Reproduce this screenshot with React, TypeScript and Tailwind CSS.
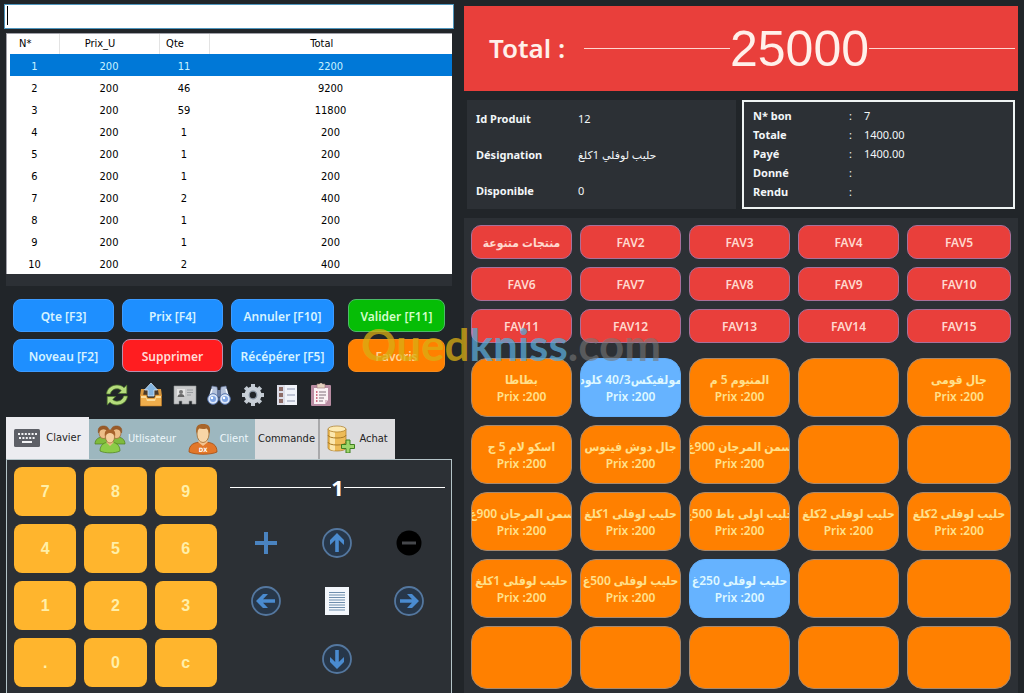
import React from 'react';

type Product = { name: string; active?: boolean } | null;

const rows = [
  [1, 200, 11, 2200],
  [2, 200, 46, 9200],
  [3, 200, 59, 11800],
  [4, 200, 1, 200],
  [5, 200, 1, 200],
  [6, 200, 1, 200],
  [7, 200, 2, 400],
  [8, 200, 1, 200],
  [9, 200, 1, 200],
  [10, 200, 2, 400],
];

const favorites = [
  'منتجات متنوعة', 'FAV2', 'FAV3', 'FAV4', 'FAV5',
  'FAV6', 'FAV7', 'FAV8', 'FAV9', 'FAV10',
  'FAV11', 'FAV12', 'FAV13', 'FAV14', 'FAV15',
];

const products: Product[] = [
  { name: 'بطاطا' },
  { name: 'مولفيكس40/3 كلود', active: true },
  { name: 'المنيوم 5 م' },
  null,
  { name: 'جال قومى' },
  { name: 'اسكو لام 5 ج' },
  { name: 'جال دوش فينوس' },
  { name: 'سمن المرجان 900غ' },
  null,
  null,
  { name: 'سمن المرجان 900غ' },
  { name: 'حليب لوفلى 1كلغ' },
  { name: 'حليب اولى باط 500غ' },
  { name: 'حليب لوفلى 2كلغ' },
  { name: 'حليب لوفلى 2كلغ' },
  { name: 'حليب لوفلى 1كلغ' },
  { name: 'حليب لوفلى 500غ' },
  { name: 'حليب لوفلى 250غ', active: true },
  null,
  null,
  null,
  null,
  null,
  null,
  null,
];

const keys = ['7', '8', '9', '4', '5', '6', '1', '2', '3', '.', '0', 'c'];

const ticket = [
  ['N* bon', '7'],
  ['Totale', '1400.00'],
  ['Payé', '1400.00'],
  ['Donné', ''],
  ['Rendu', ''],
];

/* ---------- toolbar icons ---------- */

const RefreshIcon = () => (
  <svg viewBox="0 0 24 24" className="size-6">
    <g fill="#b5dc7c" stroke="#4f7a2c" strokeWidth="0.7">
      <path d="M1.5 11C2 5.500 6.500 2 12 2c3 0 5.300 1 7 2.700L21.800 2v8.500h-8.500l3-3C15 6.300 13.700 5.800 12 5.800c-3.300 0-6 2-6.700 5.200z" />
      <path d="M22.500 13c-.5 5.500-5 9-10.500 9-3 0-5.300-1-7-2.700L2.200 22v-8.500h8.500l-3 3c1.300 1.200 2.600 1.700 4.300 1.700 3.300 0 6-2 6.700-5.200z" />
    </g>
  </svg>
);

const OutboxIcon = () => (
  <svg viewBox="0 0 24 24" className="size-6">
    <path d="M2 6h20l1 7H1z" fill="#d9983f" />
    <path d="M5 7h14l1 6H4z" fill="#4a3a28" />
    <path d="M1.500 12h6l1 3h7l1-3h6v11h-21z" fill="#f0ae4c" stroke="#c98127" strokeWidth="0.600" />
    <path d="M2 13h5l1 3h8l1-3h5v2H17l-1 3H8l-1-3H2z" fill="#fbdc9b" />
    <path d="M12 0l6.500 7H15v6H9V7H5.500z" fill="#83b4e0" stroke="#d3e7f8" strokeWidth="0.800" />
  </svg>
);

const CardIcon = () => (
  <svg viewBox="0 0 24 24" className="size-6">
    <path d="M1 3h22v18h-4v-3h-3v3H9v-3H6v3H1z" fill="#c9cacb" stroke="#909497" strokeWidth="0.600" />
    <path d="M4 6h8v8H4z" fill="#e4e4e4" />
    <circle cx="8" cy="9" r="2" fill="#777" />
    <path d="M4.500 14c0-4 7-4 7 0z" fill="#666" />
    <path d="M14 7h6M14 9.500h6M14 12h4" stroke="#9a9da0" strokeWidth="1" />
  </svg>
);

const BinocularsIcon = () => (
  <svg viewBox="0 0 24 24" className="size-6">
    <path d="M5 3l5 1 1.500 10-10 3z" fill="#b6c3dc" stroke="#5f7196" strokeWidth="0.600" />
    <path d="M19 3l-5 1-1.500 10 10 3z" fill="#b6c3dc" stroke="#5f7196" strokeWidth="0.600" />
    <path d="M5 6l-2 7M19 6l2 7" stroke="#f5f9ff" strokeWidth="1.500" />
    <rect x="10" y="7" width="4" height="6" fill="#6b7da3" />
    <circle cx="6" cy="16" r="5.300" fill="#dbe6f8" stroke="#5573ab" />
    <circle cx="18" cy="16" r="5.300" fill="#dbe6f8" stroke="#5573ab" />
    <circle cx="6" cy="16" r="3" fill="#7ea4e4" />
    <circle cx="18" cy="16" r="3" fill="#7ea4e4" />
    <circle cx="5" cy="15" r="1.200" fill="#fff" />
    <circle cx="17" cy="15" r="1.200" fill="#fff" />
  </svg>
);

const GearIcon = () => (
  <svg viewBox="0 0 24 24" className="size-6">
    <g stroke="#c3cad2" strokeWidth="4">
      <path d="M12 1v22M1 12h22M4.300 4.300l15.400 15.400M19.700 4.300L4.300 19.700" />
    </g>
    <circle cx="12" cy="12" r="8.500" fill="#c9d0d8" />
    <circle cx="12" cy="12" r="3.800" fill="#212529" stroke="#8793a1" strokeWidth="1.200" />
  </svg>
);

const ListIcon = () => (
  <svg viewBox="0 0 24 24" className="size-6">
    <rect x="2" y="2" width="20" height="20" fill="#f1f3f9" />
    <rect x="2" y="2" width="8" height="20" fill="#dcdde8" />
    <g fill="#8d6b66">
      <rect x="4" y="4" width="4" height="4" />
      <rect x="4" y="10" width="4" height="4" />
      <rect x="4" y="16" width="4" height="4" />
    </g>
    <path d="M12 6h8M12 12h8M12 18h8" stroke="#8b94ad" strokeWidth="1.200" />
  </svg>
);

const ClipboardIcon = () => (
  <svg viewBox="0 0 24 24" className="size-6">
    <rect x="2" y="2" width="20" height="21" rx="1" fill="#b98ca2" />
    <path d="M5 5h14v12l-3 4H5z" fill="#fbf2f5" />
    <path d="M19 17h-3v4z" fill="#d9bcc8" />
    <path d="M8 1h8v4H8z" fill="#e5d3c0" stroke="#977" strokeWidth="0.600" />
    <circle cx="12" cy="1.500" r="1.500" fill="#e5d3c0" />
    <path d="M10 9h7M10 12h7M10 15h5M10 18h4" stroke="#81707c" strokeWidth="1.100" />
    <path d="M7 9h1.500M7 12h1.500M7 15h1.500M7 18h1.500" stroke="#c2455d" strokeWidth="1.300" />
  </svg>
);

const tools = [
  { label: 'Actualiser', Icon: RefreshIcon },
  { label: 'Envoyer', Icon: OutboxIcon },
  { label: 'Carte', Icon: CardIcon },
  { label: 'Rechercher', Icon: BinocularsIcon },
  { label: 'Paramètres', Icon: GearIcon },
  { label: 'Liste', Icon: ListIcon },
  { label: 'Rapport', Icon: ClipboardIcon },
];

/* ---------- tab icons ---------- */

const KeyboardIcon = () => (
  <svg viewBox="0 0 26 18" className="h-[18px] w-[26px]">
    <rect width="26" height="18" rx="1.500" fill="#5d5f66" />
    <path d="M4 5h19M5 9h17" stroke="#f2f2f4" strokeWidth="2" strokeDasharray="2 1.400" />
    <path d="M8 13h10" stroke="#f2f2f4" strokeWidth="2" />
  </svg>
);

const UsersIcon = () => (
  <svg viewBox="0 0 32 30" className="h-[30px] w-8">
    <g stroke="#4d7f1d" strokeWidth="0.700" fill="#7fbb3c">
      <path d="M1 20c0-5 4-7 8-7s8 2 8 7z" />
      <path d="M15 20c0-5 4-7 8-7s8 2 8 7z" />
    </g>
    <g stroke="#8f5625" strokeWidth="0.600">
      <ellipse cx="9.500" cy="9" rx="4.500" ry="5.500" fill="#edbd87" />
      <ellipse cx="22.500" cy="9" rx="4.500" ry="5.500" fill="#edbd87" />
      <path d="M4.500 9c-1-5 1-7 5-7s6 2 5 7c-1-3-3-4-5-4s-4 1-5 4zM17.500 9c-1-5 1-7 5-7s6 2 5 7c-1-3-3-4-5-4s-4 1-5 4z" fill="#9a5a28" />
    </g>
    <path d="M6 27c0-6 4-9 10-9s10 3 10 9c-5 2.500-15 2.500-20 0z" fill="#8ccc48" stroke="#4d7f1d" strokeWidth="0.700" />
    <path d="M12 18l4 4 4-4z" fill="#edbd87" />
    <ellipse cx="16" cy="13" rx="4.500" ry="6" fill="#f6cf9e" stroke="#8f5625" strokeWidth="0.600" />
    <path d="M11 13c-1-6 1-7.500 5-7.500s6 1.500 5 7.500c-1-3-3-4-5-4s-4 1-5 4z" fill="#a8632c" />
  </svg>
);

const ClientIcon = () => (
  <svg viewBox="0 0 30 32" className="h-8 w-[30px]">
    <path d="M1 29c0-7 4-10 14-10s14 3 14 10c-6 3-22 3-28 0z" fill="#e2772a" stroke="#a54c10" strokeWidth="0.800" />
    <path d="M10 19l5 4 5-4-2-4h-6z" fill="#f2c592" />
    <ellipse cx="15" cy="11" rx="6" ry="8.500" fill="#f8d5a6" stroke="#9a6024" strokeWidth="0.700" />
    <path d="M8.500 11C7 3 10 1 15 1s8.500 2 6.500 10c-1-4-1.500-5-3-5.500-3 .8-5 .5-7.500 0-1.300 1-1.800 2.500-2.500 5.500z" fill="#a86529" />
    <text x="15" y="29" textAnchor="middle" fontSize="6" fontWeight="700" fill="#fff">DX</text>
  </svg>
);

const DatabaseIcon = () => (
  <svg viewBox="0 0 28 28" className="size-7">
    <path d="M1 4v19c0 4 18 4 18 0V4z" fill="#edbb57" stroke="#a97a25" strokeWidth="0.700" />
    <path d="M3 6v18c1 1 3 1.500 5 1.500v-18z" fill="#fbe7ae" />
    <path d="M1 10c0 4 18 4 18 0M1 17c0 4 18 4 18 0" fill="none" stroke="#a97a25" />
    <ellipse cx="10" cy="4" rx="9" ry="3" fill="#fdeab3" stroke="#a97a25" strokeWidth="0.700" />
    <path d="M19 15h4v4.500h4.500v4H23V28h-4v-4.500h-4.500v-4H19z" fill="#9ed66a" stroke="#3d7f1f" />
  </svg>
);

/* ---------- keypad navigation ---------- */

const ArrowIcon = ({ turn }: { turn: string }) => (
  <svg viewBox="0 0 30 30" className={`size-[30px] ${turn}`}>
    <circle cx="15" cy="15" r="14" fill="#27374a" stroke="#54779f" strokeWidth="1.800" />
    <path d="M13.200 24V12L8 17v-5l7-7 7 7v5l-5.200-5v12z" fill="#4a8bd0" />
  </svg>
);

const PlusIcon = () => (
  <svg viewBox="0 0 22 22" className="size-[22px]">
    <path d="M11 0v22M0 11h22" stroke="#4a83c0" strokeWidth="4" />
  </svg>
);

const MinusIcon = () => (
  <svg viewBox="0 0 26 26" className="size-[26px]">
    <circle cx="13" cy="13" r="12.500" fill="#000" />
    <path d="M6 13h14" stroke="#45474b" strokeWidth="3" />
  </svg>
);

const PageIcon = () => (
  <svg viewBox="0 0 24 28" className="h-7 w-6">
    <rect width="24" height="28" fill="#f3f7fc" />
    <path d="M4 5.500h16M4 8h16M4 10.500h16M4 13h16M4 15.500h16M4 18h16M4 20.500h16M4 23h16" stroke="#6f8fae" strokeWidth="1.200" />
  </svg>
);

const actionBase = 'h-[33px] rounded-lg border pt-0.5 text-xs font-semibold whitespace-nowrap';
const actionBlue = `${actionBase} border-[#3d9bff] bg-[#1e8fff] text-[#d6f3ff]`;

const productBase = 'flex flex-col items-center justify-center overflow-hidden rounded-2xl border';

const SalePanel = () => (
  <section className="flex flex-col pt-1 pr-2 pl-1.5 text-[11px]">
    <div className="relative -mx-0.5">
      <input
        aria-label="Code produit"
        className="block h-[25px] w-full border border-[#4f96bd] bg-white px-1 text-black outline-none"
      />
      <span className="absolute top-0.5 left-[3px] h-[19px] w-px bg-black" />
    </div>

    <div className="mt-1 bg-[#2c3035] pb-3">
      <div className="border-t border-l border-[#a0a0a8] bg-white pl-[3px]">
        <table className="w-full table-fixed border-collapse text-center font-['DejaVu_Sans_Condensed','Noto_Sans',sans-serif] text-black">
          <colgroup>
            <col className="w-[49px]" />
            <col className="w-[100px]" />
            <col className="w-[50px]" />
            <col />
          </colgroup>
          <thead>
            <tr className="h-5">
              <th className="border-r border-[#e3e3e3] p-0 pr-[18px] font-normal">N*</th>
              <th className="border-r border-[#e3e3e3] p-0 pr-[18px] font-normal">Prix_U</th>
              <th className="border-r border-[#e3e3e3] p-0 pr-[18px] font-normal">Qte</th>
              <th className="p-0 pr-[18px] font-normal">Total</th>
            </tr>
          </thead>
          <tbody>
            {rows.map((row, i) => (
              <tr key={row[0]} className={i === 0 ? 'h-[22px] bg-[#0078d7] text-[#c9f3ff]' : 'h-[22px]'}>
                {row.map((cell, j) => (
                  <td key={j} className="p-0 pt-[5px]">{cell}</td>
                ))}
              </tr>
            ))}
          </tbody>
        </table>
      </div>
    </div>

    <div className="mt-[13px] grid grid-cols-[321fr_97fr] gap-3.5 px-[7px]">
      <div className="grid grid-cols-[101fr_101fr_103fr] gap-x-2 gap-y-[7px]">
        <button className={actionBlue}>Qte [F3]</button>
        <button className={actionBlue}>Prix [F4]</button>
        <button className={actionBlue}>Annuler [F10]</button>
        <button className={actionBlue}>Noveau [F2]</button>
        <button className={`${actionBase} border-[#b98fae] bg-[#ff1d20] text-[#ffdcd6]`}>Supprimer</button>
        <button className={actionBlue}>Récépérer [F5]</button>
      </div>
      <div className="grid gap-y-[7px]">
        <button className={`${actionBase} border-[#4dbb6a] bg-[#06bd06] text-[#d3ffc9]`}>Valider [F11]</button>
        <button className={`${actionBase} border-[#f58a1c] bg-[#ff8000] text-[#ffd79a]`}>Favoris</button>
      </div>
    </div>

    <div className="mt-[11px] flex justify-center gap-2.5 pr-5">
      {tools.map(({ label, Icon }) => (
        <button key={label} aria-label={label}>
          <Icon />
        </button>
      ))}
    </div>

    <div className="mt-2.5 flex h-[42px] items-end font-['DejaVu_Sans_Condensed','Noto_Sans',sans-serif]">
      <button className="flex h-[42px] w-[83px] items-center justify-center gap-1.5 bg-[#ececf0] text-[#222]">
        <KeyboardIcon />
        Clavier
      </button>
      <button className="flex h-10 w-[92px] items-center justify-center gap-0.5 bg-[#9db7bf] text-[#eef8fc]">
        <UsersIcon />
        Utlisateur
      </button>
      <button className="flex h-10 w-[74px] items-center justify-center gap-0.5 bg-[#9db7bf] text-[#eef8fc]">
        <ClientIcon />
        Client
      </button>
      <button className="h-10 w-[65px] border-r-2 border-[#a9a9ab] bg-[#dcdcde] text-[#222]">Commande</button>
      <button className="flex h-10 w-[75px] items-center justify-center gap-1 bg-[#dcdcde] text-[#222]">
        <DatabaseIcon />
        Achat
      </button>
    </div>

    <div className="grid flex-1 grid-cols-[203fr_215fr] gap-[13px] border-x border-t border-[#b4c4c8] bg-[#2c3035] pt-[7px] pr-1.5 pb-1 pl-[7px]">
      <div className="grid auto-rows-[49px] grid-cols-3 content-start gap-2 font-['Liberation_Sans',sans-serif]">
        {keys.map((key) => (
          <button key={key} className="rounded-lg bg-[#ffb52d] text-base font-bold text-[#ffefa8]">
            {key}
          </button>
        ))}
      </div>
      <div>
        <div className="flex h-10 items-center text-[22px] font-bold text-white">
          <span className="h-px flex-1 bg-white" />
          1
          <span className="h-px flex-1 bg-white" />
        </div>
        <div className="mt-[7px] grid auto-rows-[58px] grid-cols-3 place-items-center">
          <button aria-label="Plus"><PlusIcon /></button>
          <button aria-label="Haut"><ArrowIcon turn="rotate-0" /></button>
          <button aria-label="Moins"><MinusIcon /></button>
          <button aria-label="Gauche"><ArrowIcon turn="-rotate-90" /></button>
          <button aria-label="Note"><PageIcon /></button>
          <button aria-label="Droite"><ArrowIcon turn="rotate-90" /></button>
          <button aria-label="Bas" className="col-start-2"><ArrowIcon turn="rotate-180" /></button>
        </div>
      </div>
    </div>
  </section>
);

const CatalogPanel = () => (
  <section className="flex flex-col pt-1.5 pr-1.5 pl-1">
    <div className="flex h-[85px] items-center bg-[#e93f3b] pr-[3px] pl-[25px] text-[#fff0ea]">
      <span className="w-[95px] text-[26px] font-semibold whitespace-nowrap">Total :</span>
      <span className="h-px flex-1 bg-[#ffd6d0]" />
      <span className="font-['Liberation_Sans',sans-serif] text-[50px] leading-none">25000</span>
      <span className="h-px flex-1 bg-[#ffd6d0]" />
    </div>

    <div className="mt-[9px] grid h-[109px] grid-cols-[269fr_273fr] gap-1.5 px-[3px] text-[11px] text-[#f2f6f8]">
      <dl className="grid grid-cols-[102px_1fr] content-center items-center gap-y-4 bg-[#2c3035] pl-[9px] leading-5">
        <dt className="font-bold">Id Produit</dt>
        <dd>12</dd>
        <dt className="font-bold">Désignation</dt>
        <dd><bdi dir="rtl">حليب لوفلي 1كلغ</bdi></dd>
        <dt className="font-bold">Disponible</dt>
        <dd>0</dd>
      </dl>
      <dl className="flex flex-col justify-center border-2 border-[#eef3f3] bg-[#2c3035] pb-[3px] pl-[9px] leading-[19px]">
        {ticket.map(([label, value]) => (
          <div key={label} className="flex">
            <dt className="w-24 font-bold">{label}</dt>
            <dd className="flex gap-3">
              <span>:</span>
              {value}
            </dd>
          </div>
        ))}
      </dl>
    </div>

    <div className="mt-[9px] flex-1 bg-[#2c3035] px-[7px] pt-[7px] pb-1 font-semibold">
      <div className="grid auto-rows-[34px] grid-cols-[101fr_101fr_101fr_101fr_104fr] gap-2">
        {favorites.map((name) => (
          <button
            key={name}
            className="rounded-[10px] border border-[#a8709a] bg-[#e93f3b] pt-0.5 font-['Noto_Sans','DejaVu_Sans_Condensed',sans-serif] text-xs whitespace-nowrap text-[#ffd9cf]"
          >
            {name}
          </button>
        ))}
      </div>
      <div className="mt-[15px] grid grid-cols-[101fr_101fr_101fr_101fr_104fr] grid-rows-[repeat(4,59px)_63px] gap-2 font-['Noto_Sans','DejaVu_Sans_Condensed',sans-serif] text-xs leading-[17px]">
        {products.map((product, i) => (
          <button
            key={i}
            className={
              product?.active
                ? `${productBase} border-[#62adf8] bg-[#66b3ff] text-[#def8ff]`
                : `${productBase} border-[#a8896e] bg-[#ff8000] text-[#ffe08c]`
            }
          >
            {product && (
              <>
                <span dir="rtl" className="whitespace-nowrap">{product.name}</span>
                <span>Prix :200</span>
              </>
            )}
          </button>
        ))}
      </div>
    </div>
  </section>
);

const App = () => {
  return (
    <main className="relative grid min-h-screen grid-cols-[460fr_564fr] overflow-hidden bg-[#212529] font-['Noto_Sans','DejaVu_Sans',sans-serif]">
      <SalePanel />
      <CatalogPanel />

      {/* Site watermark over both panels */}
      <div className="pointer-events-none absolute top-[322px] left-[361px] font-['Lato',sans-serif] text-[44px] leading-[44px] font-bold whitespace-nowrap">
        <span className="text-[#d9ae13]/75">Oued</span>
        <span className="text-[#5aa9d6]/75">kniss</span>
        <span className="text-[#777777]/60">.com</span>
      </div>
    </main>
  );
};

export default App;
